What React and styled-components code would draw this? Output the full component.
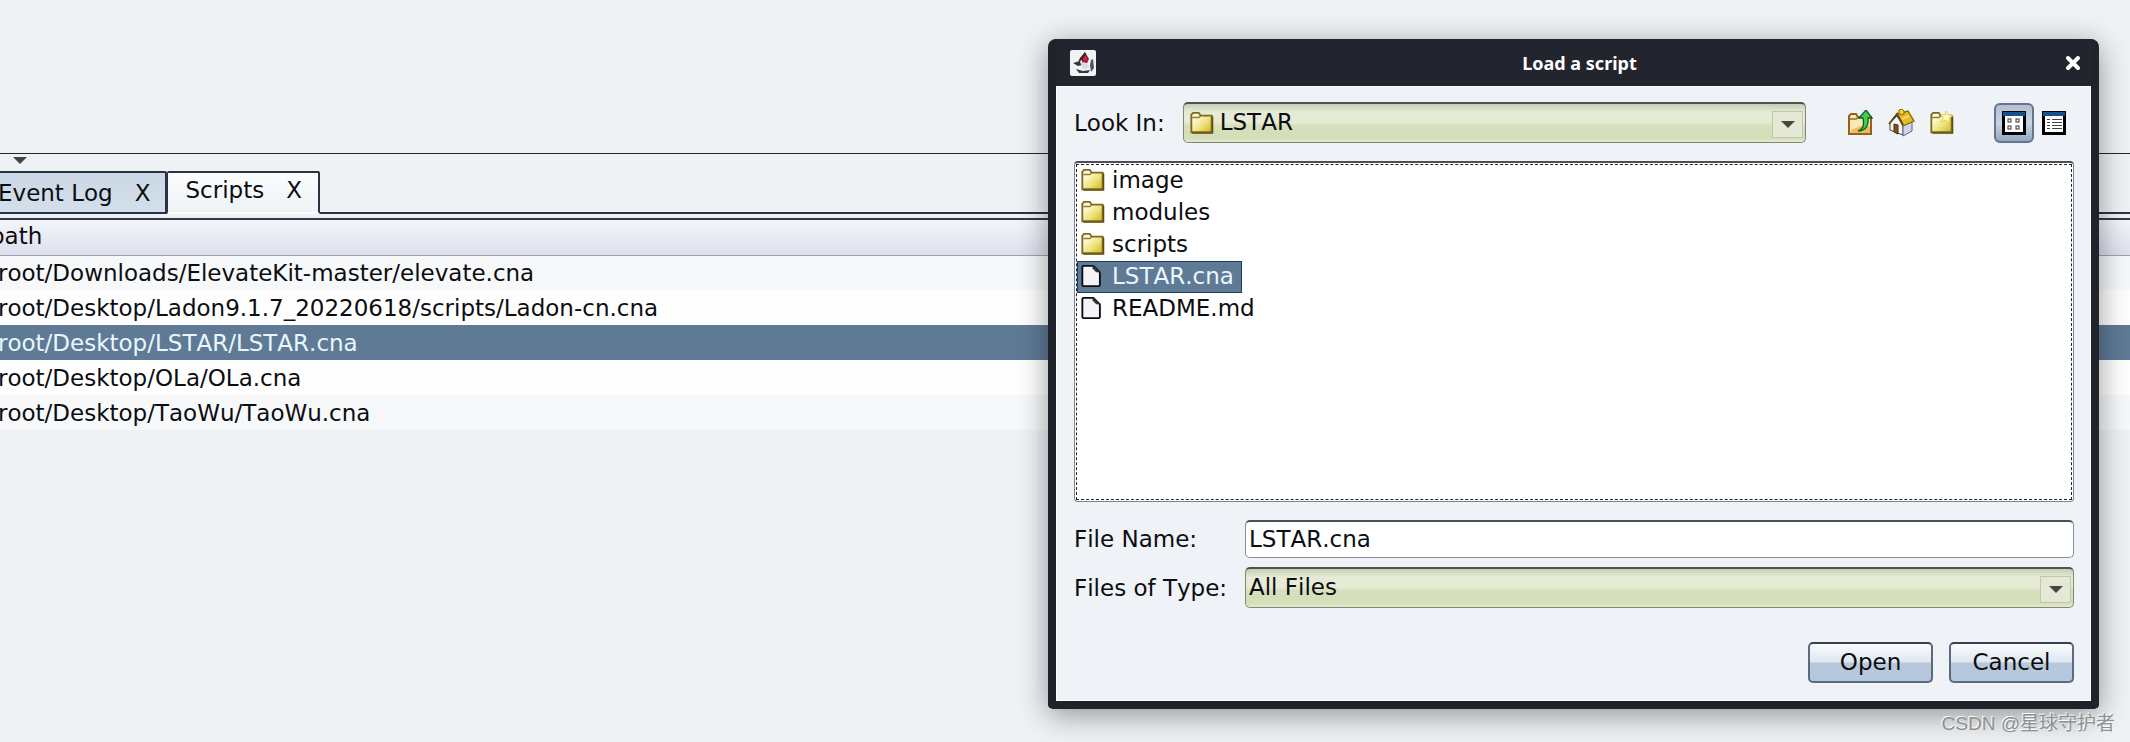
import React, { useState } from "react";
import styled, { createGlobalStyle } from "styled-components";

const scripts = [
  "root/Downloads/ElevateKit-master/elevate.cna",
  "root/Desktop/Ladon9.1.7_20220618/scripts/Ladon-cn.cna",
  "root/Desktop/LSTAR/LSTAR.cna",
  "root/Desktop/OLa/OLa.cna",
  "root/Desktop/TaoWu/TaoWu.cna",
];

const files = [
  { name: "image", folder: true },
  { name: "modules", folder: true },
  { name: "scripts", folder: true },
  { name: "LSTAR.cna" },
  { name: "README.md" },
];

const FolderIcon = ({ sparkle }) => (
  <svg width="25" height="24" viewBox="0 0 26 26">
    <defs>
      <linearGradient id="folder" x1="0" y1="0" x2="1" y2="1">
        <stop offset="0.2" stopColor="#fffde0" />
        <stop offset="0.6" stopColor="#eee27a" />
        <stop offset="1" stopColor="#c9b428" />
      </linearGradient>
    </defs>
    <path
      d="M2 23V4L4 2H10L12 5H24V23Z"
      fill="url(#folder)"
      stroke="#7c6a1e"
      strokeWidth="2"
    />
    <path d="M3 7H10L12 5.500" fill="none" stroke="#8f7d2a" strokeWidth="1.500" />
    <path d="M25 6V24H3" fill="none" stroke="#5f4d10" strokeWidth="1.500" />
    {sparkle && (
      <path
        d="M18 0L20 4L25 5L21 8L22 13L18 10L13 12L15 7L12 4L17 4Z"
        fill="#fffbc0"
        stroke="#e6c94a"
        strokeWidth="1"
      />
    )}
  </svg>
);

const UpFolderIcon = () => (
  <svg width="26" height="26" viewBox="0 0 26 26">
    <path
      d="M2 24V6L4 4H9L11 7H24V24Z"
      fill="#f6ebb8"
      stroke="#94601c"
      strokeWidth="2"
    />
    <path d="M14 16H23V23H4V20Z" fill="#f0b860" />
    <path d="M3 9H9L11 7.500" fill="none" stroke="#9a6a2c" strokeWidth="1.500" />
    <path
      d="M11 21C17 19 17 14 16 8H12L19 0L25 8H21C22 15 19 21 11 21Z"
      fill="#45cc55"
      stroke="#0d5f22"
      strokeWidth="1.300"
    />
  </svg>
);

const HomeIcon = () => (
  <svg width="28" height="28" viewBox="0 0 28 28">
    <path d="M3 14L10 7L16 16V26L3 21Z" fill="#f4f5f7" stroke="#454545" />
    <path d="M16 16L25 13V22L16 27Z" fill="#ccd6ea" stroke="#596376" />
    <path d="M7 15L11 16V25L7 23Z" fill="#875020" stroke="#4a2a0c" />
    <path
      d="M10 5L21 2L27 12L16 17Z"
      fill="#eaba23"
      stroke="#8a6508"
      strokeWidth="1.300"
    />
    <path d="M2 15L10 5L16 16" fill="none" stroke="#5c4a1c" strokeWidth="2" />
    <path d="M12 4V1L15 0L17 2V5L14 6Z" fill="#f5d23a" stroke="#8a6508" />
    <path d="M15 10L22 7" stroke="#f9e37c" strokeWidth="1.500" />
  </svg>
);

const FileIcon = () => (
  <svg width="25" height="24" viewBox="0 0 26 26">
    <path
      d="M3 2H14L21 9V23L20 24H3L2 23V3Z"
      fill="#f3f3f8"
      stroke="#0c0c10"
      strokeWidth="2"
    />
    <path d="M13 2V5L17 9H21L14 2Z" fill="#33343c" />
  </svg>
);

const ListViewIcon = () => (
  <svg width="24" height="24" viewBox="0 0 24 24">
    <path d="M1.500 1.500H22.500V22.500H1.500Z" fill="#fff" stroke="#000" strokeWidth="3" />
    <path d="M1 1H23V5H1Z" fill="#174f8f" />
    {[8, 15].map((y) =>
      [6, 14].map((x) => (
        <rect key={`${x}-${y}`} x={x} y={y} width="3" height="3" fill="#fff" stroke="#333" />
      ))
    )}
  </svg>
);

const DetailsViewIcon = () => (
  <svg width="24" height="24" viewBox="0 0 24 24">
    <path d="M1.500 1.500H22.500V22.500H1.500Z" fill="#fff" stroke="#000" strokeWidth="3" />
    <path d="M1 1H23V5H1Z" fill="#174f8f" />
    <path
      d="M5 8.500H8M10 8.500H20M5 11.500H8M10 11.500H20M5 14.500H8M10 14.500H20M5 17.500H8M10 17.500H20"
      stroke="#444"
    />
  </svg>
);

const AppIcon = () => (
  <svg width="26" height="26" viewBox="0 0 26 26">
    <rect width="26" height="26" rx="2" fill="#f1f2f4" />
    <path d="M3 13L10 11L12 15L8 16Z" fill="#30343c" />
    <path d="M21 10L23 9L24 18L21 22L20 15Z" fill="#50545c" />
    <path d="M6 19L13 21L20 20L18 23H9Z" fill="#353a40" />
    <path d="M10 12L17 11L19 18L13 19Z" fill="#d9dde0" />
    <path d="M12 7L15 2L19 9L17 13L12 12Z" fill="#a3173a" />
    <path d="M10 8L15 2L16 5L12 10L8 12Z" fill="#33262c" />
    <path d="M13 8L16 5L17 10L14 11Z" fill="#d02448" />
  </svg>
);

const CloseIcon = () => (
  <svg width="16" height="16" viewBox="0 0 16 16">
    <path d="M3 3L13 13M13 3L3 13" stroke="#fff" strokeWidth="4" strokeLinecap="round" />
  </svg>
);

const DownArrow = () => (
  <svg width="14" height="8" viewBox="0 0 14 8">
    <path d="M0 0H14L7 7Z" fill="#45463f" />
  </svg>
);

function LoadDialog() {
  const [selected, setSelected] = useState("LSTAR.cna");
  const [fileName, setFileName] = useState("LSTAR.cna");

  const choose = (name) => {
    setSelected(name);
    setFileName(name);
  };

  return (
    <Dialog role="dialog" aria-labelledby="dialog-title">
      <TitleBar>
        <AppIcon />
        <Title id="dialog-title">Load a script</Title>
        <CloseButton aria-label="Close">
          <CloseIcon />
        </CloseButton>
      </TitleBar>
      <DialogBody>
        <LookRow>
          <Label htmlFor="look-in">Look In:</Label>
          <Combo>
            <ComboIcon>
              <FolderIcon />
            </ComboIcon>
            <Select id="look-in" $icon>
              <option>LSTAR</option>
            </Select>
            <ComboArrow>
              <DownArrow />
            </ComboArrow>
          </Combo>
          <Tools>
            <ToolButton aria-label="Up one level">
              <UpFolderIcon />
            </ToolButton>
            <ToolButton aria-label="Home">
              <HomeIcon />
            </ToolButton>
            <ToolButton aria-label="Create new folder">
              <FolderIcon sparkle />
            </ToolButton>
          </Tools>
          <Views>
            <ViewButton aria-label="List" aria-pressed="true" $active>
              <ListViewIcon />
            </ViewButton>
            <ViewButton aria-label="Details" aria-pressed="false">
              <DetailsViewIcon />
            </ViewButton>
          </Views>
        </LookRow>
        <FilePane>
          <FileList>
            {files.map((file) => (
              <li key={file.name}>
                <FileItem
                  $selected={file.name === selected}
                  onClick={() => choose(file.name)}
                >
                  {file.folder ? <FolderIcon /> : <FileIcon />}
                  {file.name}
                </FileItem>
              </li>
            ))}
          </FileList>
        </FilePane>
        <Fields>
          <Label htmlFor="file-name">File Name:</Label>
          <TextInput
            id="file-name"
            value={fileName}
            onChange={(e) => setFileName(e.target.value)}
          />
          <Label htmlFor="file-type">Files of Type:</Label>
          <Combo>
            <Select id="file-type">
              <option>All Files</option>
            </Select>
            <ComboArrow>
              <DownArrow />
            </ComboArrow>
          </Combo>
        </Fields>
        <Actions>
          <Button>Open</Button>
          <Button>Cancel</Button>
        </Actions>
      </DialogBody>
    </Dialog>
  );
}

export default function App() {
  const [current, setCurrent] = useState(2);

  return (
    <>
      <GlobalStyle />
      <Desktop>
        <UpperPane />
        <Splitter>
          <DownArrow />
        </Splitter>
        <TabBar role="tablist">
          <Tab role="tab" aria-selected="false">
            Event Log <span>X</span>
          </Tab>
          <Tab role="tab" aria-selected="true" $active>
            Scripts <span>X</span>
          </Tab>
          <TabFill />
        </TabBar>
        <TabEdge />
        <Table>
          <thead>
            <tr>
              <HeadCell>path</HeadCell>
            </tr>
          </thead>
          <tbody>
            {scripts.map((path, index) => (
              <Row
                key={path}
                $selected={index === current}
                onClick={() => setCurrent(index)}
              >
                <td>{path}</td>
              </Row>
            ))}
          </tbody>
        </Table>
        <LoadDialog />
        <Watermark>CSDN @星球守护者</Watermark>
      </Desktop>
    </>
  );
}

// Styled components
const GlobalStyle = createGlobalStyle`
  * {
    box-sizing: border-box;
  }

  body {
    margin: 0;
    color: #0c0d10;
    background: #eff2f5;
    font-family: "DejaVu Sans", "Noto Sans CJK SC", sans-serif;
    font-size: 23px;
    font-kerning: none;
  }

  button,
  input,
  select {
    color: inherit;
    font: inherit;
    font-kerning: none;
  }

  svg {
    display: block;
    flex: none;
  }
`;

const Desktop = styled.main`
  position: relative;
  min-height: 100vh;
  overflow: hidden;
`;

const UpperPane = styled.section`
  height: 153px;
  border-bottom: 1px solid #22252b;
  box-sizing: content-box;
`;

const Splitter = styled.div`
  display: flex;
  height: 17px;
  padding: 3px 13px;
`;

const TabBar = styled.div`
  display: flex;
  height: 43px;
`;

const Tab = styled.button`
  display: flex;
  align-items: center;
  gap: 22px;
  height: 43px;
  margin-left: ${(props) => (props.$active ? "0" : "-4px")};
  padding: ${(props) => (props.$active ? "0 16px 6px 17px" : "0 15px 0 0")};
  border: 2px solid #2b3242;
  border-left-width: ${(props) => (props.$active ? "1px" : "2px")};
  border-bottom-color: ${(props) => (props.$active ? "transparent" : "#2b3242")};
  border-radius: 2px 2px 0 0;
  background: ${(props) =>
    props.$active
      ? "linear-gradient(#fbfcfe, #eff3f6)"
      : "linear-gradient(#cbd7e4, #d3e0ec)"};
  white-space: nowrap;
`;

const TabFill = styled.div`
  flex: 1;
  border-bottom: 2px solid #2b3242;
`;

const TabEdge = styled.div`
  height: 6px;
  border-bottom: 2px solid #343947;
`;

const Table = styled.table`
  width: 100%;
  border-collapse: collapse;
  text-align: left;

  td {
    height: 35px;
    padding: 0;
    text-indent: -2px;
  }
`;

const HeadCell = styled.th`
  height: 35px;
  padding: 0 0 2px;
  border-bottom: 1px solid #9ea3b4;
  background: linear-gradient(#f3f5fb, #dde0ec);
  font-weight: normal;
  text-indent: -10px;
`;

const Row = styled.tr`
  color: ${(props) => (props.$selected ? "#e9f6ff" : "inherit")};
  background: ${(props) => (props.$selected ? "#5f7a95" : "#fefefe")};

  &:nth-child(odd) {
    background: ${(props) => (props.$selected ? "#5f7a95" : "#f6f8f9")};
  }
`;

const Dialog = styled.section`
  position: absolute;
  top: 39px;
  right: 31px;
  left: 1048px;
  border: 8px solid #21232b;
  border-top: 0;
  border-radius: 8px 8px 5px 5px;
  background: #22242e;
  box-shadow: 0 6px 30px rgba(0, 0, 0, 0.4);
`;

const TitleBar = styled.header`
  display: flex;
  align-items: center;
  justify-content: space-between;
  height: 47px;
  padding: 0 8px 0 14px;
  color: #fff;
`;

const Title = styled.h1`
  margin: 0;
  font-family: "Noto Sans", sans-serif;
  font-size: 18px;
  font-weight: bold;
`;

const CloseButton = styled.button`
  padding: 2px;
  border: 0;
  background: none;
`;

const DialogBody = styled.div`
  padding: 15px 16px 17px 17px;
  border: 1px solid #fff;
  background: #eff2f6;
`;

const LookRow = styled.div`
  display: flex;
  align-items: center;
`;

const Label = styled.label`
  white-space: nowrap;
`;

const Combo = styled.div`
  position: relative;
  display: flex;
  flex: 1;
  height: 41px;
  border: 1px solid #83886f;
  border-top: 2px solid #4f5448;
  border-radius: 5px;
  background: linear-gradient(#c8ccb8, #e6ebd6 22%, #e6ebd6 48%, #d5dfbc 58%, #d3dfb8 90%, #e2ead0);

  ${LookRow} & {
    margin-left: 18px;
  }
`;

const ComboIcon = styled.span`
  position: absolute;
  top: 7px;
  left: 5px;
  pointer-events: none;
`;

const Select = styled.select`
  width: 100%;
  padding: 0 40px 2px ${(props) => (props.$icon ? "36px" : "3px")};
  border: 0;
  background: none;
  appearance: none;
`;

const ComboArrow = styled.span`
  position: absolute;
  top: 7px;
  right: 2px;
  bottom: 4px;
  display: grid;
  width: 31px;
  place-items: center;
  border: 1px solid #c0c7aa;
  background: #e4e8d4;
  pointer-events: none;
`;

const Tools = styled.div`
  display: flex;
  align-items: center;
  gap: 14px;
  margin-left: 41px;
`;

const ToolButton = styled.button`
  padding: 0;
  border: 0;
  background: none;
`;

const Views = styled.div`
  display: flex;
  align-items: center;
  margin-left: 40px;
`;

const ViewButton = styled.button`
  display: grid;
  width: 40px;
  height: 40px;
  padding: 0;
  place-items: center;
  border: 2px solid ${(props) => (props.$active ? "#66758c" : "transparent")};
  border-radius: 6px;
  background: ${(props) =>
    props.$active ? "linear-gradient(#b4c0d2, #c8d3e2 50%, #93a8c3)" : "none"};
`;

const FilePane = styled.div`
  height: 341px;
  margin-top: 18px;
  padding: 1px;
  border: 1px solid #7e828b;
  border-top: 2px solid #4c4f55;
  border-radius: 4px;
  background: #fff;
`;

const FileList = styled.ul`
  height: 100%;
  margin: 0;
  padding: 0;
  border: 1px dashed #23252b;
  list-style: none;
`;

const FileItem = styled.button`
  display: flex;
  align-items: center;
  gap: 7px;
  height: 32px;
  padding: 0 7px 2px 2px;
  border: 1px solid ${(props) => (props.$selected ? "#153e63" : "transparent")};
  color: ${(props) => (props.$selected ? "#e9f6ff" : "inherit")};
  background: ${(props) => (props.$selected ? "#5f7a95" : "none")};
`;

const Fields = styled.div`
  display: grid;
  grid-template-columns: 154px 1fr;
  gap: 9px 17px;
  align-items: center;
  margin-top: 18px;
`;

const TextInput = styled.input`
  width: 100%;
  height: 38px;
  padding: 0 3px 2px;
  border: 1px solid #8a8e96;
  border-top: 2px solid #4c4f55;
  border-radius: 5px;
  background: #fff;
`;

const Actions = styled.div`
  display: flex;
  justify-content: flex-end;
  gap: 16px;
  margin-top: 34px;
`;

const Button = styled.button`
  width: 125px;
  height: 41px;
  padding: 0 0 1px;
  border: 2px solid #5a6a80;
  border-top-color: #3a4150;
  border-radius: 5px;
  background: linear-gradient(#fbfcfe, #dfe7f0 48%, #b9c8da 52%, #b4c8df);
`;

const Watermark = styled.footer`
  position: absolute;
  right: 15px;
  bottom: 7px;
  color: #8e9092;
  font-family: "Liberation Sans", "Noto Sans CJK SC", sans-serif;
  font-size: 19px;
  text-shadow: -1px -1px 0 #fafbfb;
`;
